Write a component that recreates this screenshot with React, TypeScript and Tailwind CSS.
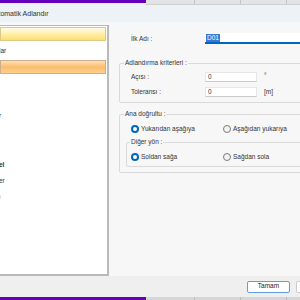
import React from "react";

const listRows: { text?: string; kind?: "yellow" | "orange"; color?: string; bold?: boolean }[] = [
  { kind: "yellow" },
  { text: "lar" },
  { kind: "orange" },
  {},
  {},
  { text: "r" },
  {},
  {},
  { text: "el", bold: true },
  { text: "er" },
  { text: "ı", color: "text-[#e06a6a]" },
];

function Radio({ checked, label }: { checked?: boolean; label: string }) {
  return (
    <div className="flex items-center gap-[2px]">
      {checked ? (
        <span className="w-[8px] h-[8px] rounded-full bg-[#0067c0] flex items-center justify-center">
          <span className="w-[4px] h-[4px] rounded-full bg-white" />
        </span>
      ) : (
        <span className="w-[8px] h-[8px] rounded-full border border-[#7a7a7a] bg-[#f3f3f3]" />
      )}
      <span>{label}</span>
    </div>
  );
}

export default function App() {
  return (
    <div className="w-[300px] h-[300px] overflow-hidden flex flex-col bg-[#f7f7f7] text-[#333] font-['Liberation_Sans',Arial,sans-serif]">
      {/* top strip */}
      <div className="flex h-[5px] shrink-0">
        <div className="w-[146px] bg-[#edf2f6]">
          <div className="h-[3px] bg-[#6400be]" />
        </div>
        <div className="flex-1 flex bg-[#e4e4e4] border-b border-[#cfcfcf]">
          <div className="w-[49px] border-r border-[#c4c4c4]" />
          <div className="w-[46px] border-r border-[#c4c4c4]" />
          <div className="w-[46px] border-r border-[#c4c4c4]" />
        </div>
      </div>

      {/* title bar */}
      <div className="h-[17px] shrink-0 bg-[#edf2f6] flex items-center pt-[2px]">
        <span className="-ml-[7px] text-[7px] text-[#333] whitespace-nowrap">Otomatik Adlandır</span>
      </div>

      {/* main */}
      <div className="flex flex-1 min-h-0">
        <div className="w-[109px] shrink-0 mt-[3px] bg-white border-t border-r-2 border-b-2 border-[#bababa] overflow-hidden">
          {listRows.map((r, i) => (
            <div key={i} className="h-[16.3px] flex items-center py-[1px] pr-[1px] text-[6.5px] whitespace-nowrap">
              {r.kind === "yellow" && (
                <div className="w-full h-full border border-[#dcc98e] bg-[linear-gradient(#fffbe8,#fff0b0_45%,#ffe06a)]" />
              )}
              {r.kind === "orange" && (
                <div className="w-full h-full border border-[#cdb08a] bg-[linear-gradient(#fde0b8,#fbbd6c_50%,#fdcf8c)]" />
              )}
              {r.text && (
                <span className={`-ml-[1px] ${r.color ?? "text-[#333]"} ${r.bold ? "font-bold" : ""}`}>{r.text}</span>
              )}
            </div>
          ))}
        </div>

        <div className="flex-1 min-w-0 overflow-hidden pl-[10px] text-[6.5px] text-[#333]">
          <div className="flex items-center mt-[11px] h-[11px] pl-[12px]">
            <span className="w-[74px] shrink-0">İlk Adı :</span>
            <div className="flex-1 h-full bg-white border-b-2 border-[#0067c0] flex items-center pl-[1px] -mr-[4px]">
              <span className="bg-[#3a78d6] text-white px-[1px] leading-[8px]">D01</span>
            </div>
          </div>

          <fieldset className="mt-[15px] -mr-[6px] border border-[#dadada] rounded-[2px]">
            <legend className="ml-[4px] px-[1px] leading-[8px]">Adlandırma kriterleri :</legend>
            <div className="pt-[5px] pb-[5px] pl-[11px] flex flex-col gap-[5px]">
              <div className="flex items-center h-[10px]">
                <span className="w-[74px] shrink-0">Açısı :</span>
                <div className="w-[52px] h-full bg-white border border-[#e6e6e6] border-b-[#c9c9c9] flex items-center pl-[2px]">0</div>
                <span className="ml-[7px] -mt-[3px]">°</span>
              </div>
              <div className="flex items-center h-[10px]">
                <span className="w-[74px] shrink-0">Toleransı :</span>
                <div className="w-[52px] h-full bg-white border border-[#e6e6e6] border-b-[#c9c9c9] flex items-center pl-[2px]">0</div>
                <span className="ml-[7px]">[m]</span>
              </div>
            </div>
          </fieldset>

          <fieldset className="mt-[7px] -mr-[6px] border border-[#dadada] rounded-[2px]">
            <legend className="ml-[4px] px-[1px] leading-[8px]">Ana doğrultu :</legend>
            <div className="pt-[6px] pb-[5px] pl-[6px]">
              <div className="flex items-center h-[10px] pl-[5px]">
                <div className="w-[92px] shrink-0">
                  <Radio checked label="Yukarıdan aşağıya" />
                </div>
                <Radio label="Aşağıdan yukarıya" />
              </div>
              <fieldset className="mt-[4px] border border-[#dadada] rounded-[2px]">
                <legend className="ml-[3px] px-[1px] leading-[8px]">Diğer yön :</legend>
                <div className="pt-[6px] pb-[4px] pl-[4px] flex items-center h-[20px]">
                  <div className="w-[92px] shrink-0">
                    <Radio checked label="Soldan sağa" />
                  </div>
                  <Radio label="Sağdan sola" />
                </div>
              </fieldset>
            </div>
          </fieldset>
        </div>
      </div>

      {/* bottom bar */}
      <div className="h-[21px] shrink-0 bg-[#efefef] flex items-center justify-end gap-[6px] -mr-[10px]">
        <button className="w-[43px] h-[12px] bg-white border border-[#5e9ee0] rounded-[2px] text-[6.5px] text-[#222] leading-none">
          Tamam
        </button>
        <button className="w-[14px] h-[12px] bg-white border border-[#cccccc] rounded-[2px]" />
      </div>

      {/* bottom strip */}
      <div className="flex h-[3px] shrink-0">
        <div className="w-[146px] bg-[#6400be]" />
        <div className="flex-1 flex bg-[#d6d6d6]">
          <div className="w-[49px] border-r border-[#bdbdbd]" />
          <div className="w-[46px] border-r border-[#bdbdbd]" />
          <div className="w-[46px] border-r border-[#bdbdbd]" />
        </div>
      </div>
    </div>
  );
}
